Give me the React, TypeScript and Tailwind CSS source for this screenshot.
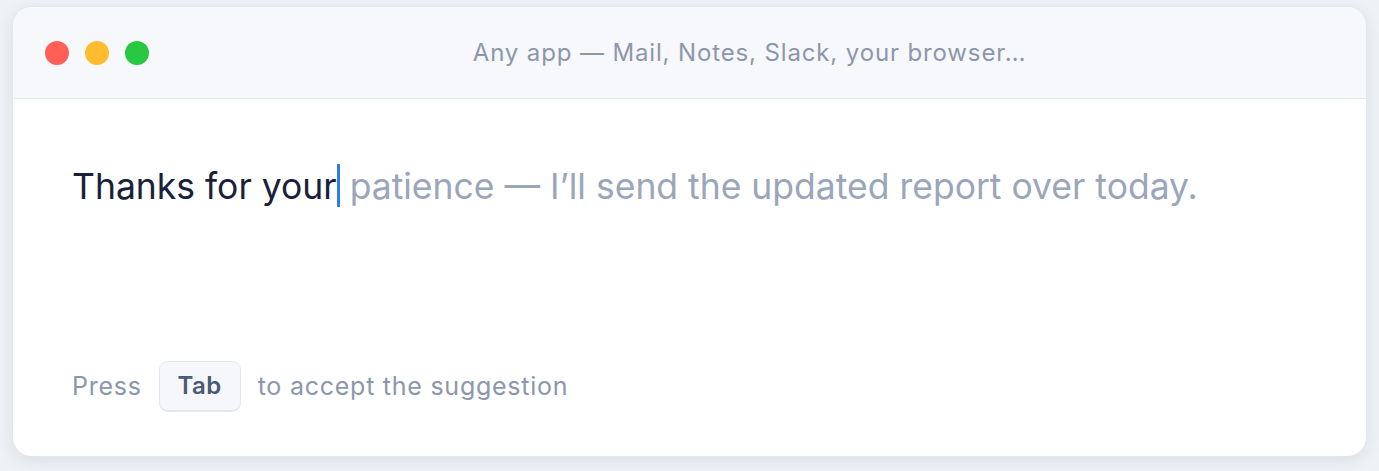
import React from 'react';

const font = { fontFamily: 'Inter, "Noto Sans", sans-serif' };

const TrafficLights: React.FC = () => (
    <div className="flex items-center gap-4">
        <span className="block w-6 h-6 rounded-full bg-[#ff5f57]" />
        <span className="block w-6 h-6 rounded-full bg-[#febc2e]" />
        <span className="block w-6 h-6 rounded-full bg-[#28c840]" />
    </div>
);

const App: React.FC = () => {
    return (
        <div className="h-[471px] bg-[#eef1f5] pt-[6px] px-[12px]" style={font}>
            <div className="h-[451px] flex flex-col bg-white rounded-[20px] border border-[#e2e8f0] shadow-[0_4px_18px_rgba(15,23,42,0.08)] overflow-hidden">
                {/* title bar */}
                <div className="h-[92px] shrink-0 flex items-center gap-4 px-8 bg-[#f7f8fb] border-b border-[#e2e8f0]">
                    <TrafficLights />
                    <div className="flex-1 text-center text-[24px] text-[#8b97ab] tracking-[0.036em]">
                        Any app — Mail, Notes, Slack, your browser…
                    </div>
                </div>

                {/* editor */}
                <div className="flex-1 flex flex-col px-[59px] pt-[64px] pb-[44px]">
                    <p className="text-[35.5px] leading-[48px] text-[#19213a]">
                        Thanks for your
                        <span className="inline-block align-[-8px] w-[3px] h-[43px] bg-[#2f7de1]" />
                        {' '}
                        <span className="text-[#9aa6ba]">patience — I’ll send the updated report over today.</span>
                    </p>

                    <div className="mt-auto flex items-center gap-[17px] text-[25px] tracking-[0.03em] text-[#8b97ab]">
                        <span>Press</span>
                        <kbd className="inline-flex items-center justify-center w-[82px] h-[51px] rounded-[9px] bg-[#f5f7fb] border border-[#e2e8f0] border-b-2 text-[24px] font-semibold tracking-[0.02em] text-[#4a5a74]" style={font}>
                            Tab
                        </kbd>
                        <span>to accept the suggestion</span>
                    </div>
                </div>
            </div>
        </div>
    );
};

export default App;
